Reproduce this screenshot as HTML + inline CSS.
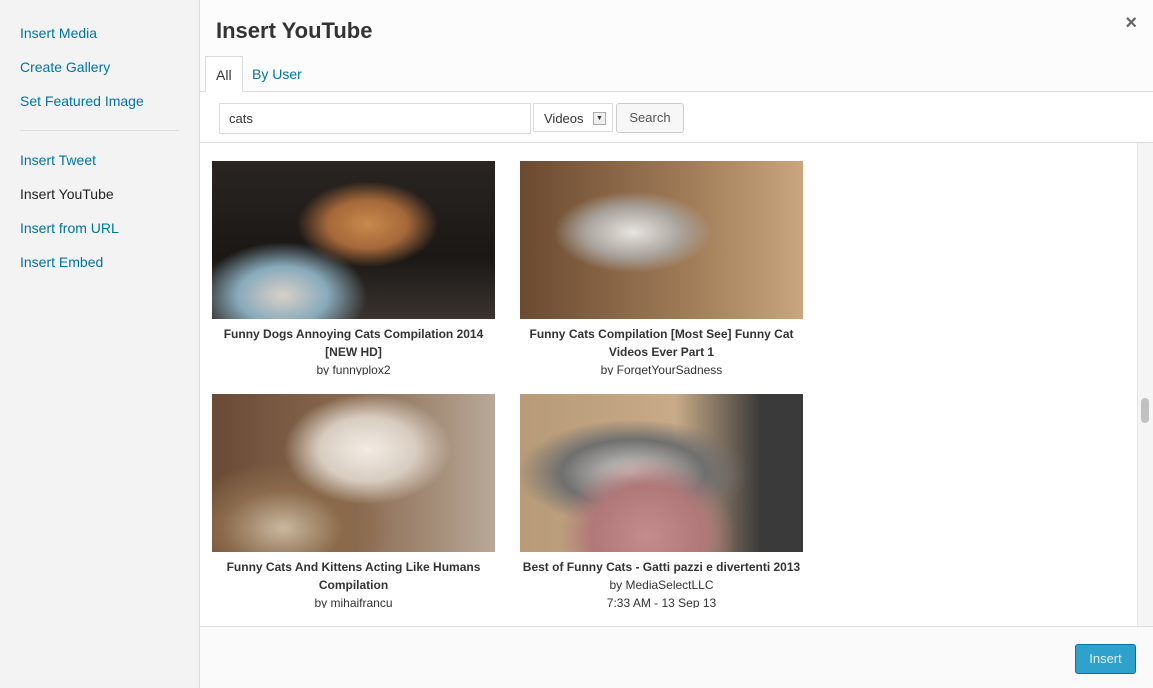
<!DOCTYPE html>
<html><head><style>
*{margin:0;padding:0;box-sizing:border-box}
body{width:1153px;height:688px;overflow:hidden;font-family:"Liberation Sans",sans-serif;background:#fff;position:relative}
.side{position:absolute;left:0;top:0;width:200px;height:688px;background:#f3f3f3;border-right:1px solid #ddd}
.side a{position:absolute;left:20px;font-size:14px;color:#0074a2;text-decoration:none}
.side .cur{color:#222}
.hr{position:absolute;left:20px;width:159px;top:130px;border-top:1px solid #ddd}
.head{position:absolute;left:200px;top:0;width:953px;height:92px;background:#fcfcfc;border-bottom:1px solid #ddd}
h1{position:absolute;left:16px;top:18px;font-size:22px;color:#333;font-weight:bold}
.x{position:absolute;right:16px;top:12px;font-size:20px;color:#666;font-weight:bold}
.tab{position:absolute;top:56px;height:37px;font-size:14px;padding:10px 10px 0}
.bar{position:absolute;left:200px;top:92px;width:953px;height:51px;background:#fff;border-bottom:1px solid #ddd}
.in{position:absolute;left:19px;top:11px;width:312px;height:31px;border:1px solid #ddd;font-size:13px;padding:7px 9px;color:#333}
.sel{position:absolute;left:333px;top:11px;width:80px;height:29px;border:1px solid #ddd;font-size:13px;padding:7px 10px;color:#333}
.sel b{position:absolute;right:6px;top:8px;width:13px;height:13px;background:#eee;border:1px solid #aaa;font-size:7px;text-align:center;line-height:12px}
.btn{position:absolute;left:416px;top:11px;width:68px;height:30px;border:1px solid #ccc;border-radius:3px;background:#f7f7f7;font-size:13px;color:#555;text-align:center;line-height:28px}
.item{position:absolute;width:283px}
.img{height:158px}
.cap{height:50px;overflow:hidden;text-align:center;font-size:12px;line-height:18px;color:#333;margin-top:6px}
.cap b{font-weight:bold}
.sb{position:absolute;left:1137px;top:143px;width:16px;height:483px;background:#f5f5f5;border-left:1px solid #e5e5e5}
.sb i{position:absolute;left:3px;top:255px;width:8px;height:25px;background:#c1c1c1;border-radius:4px}
.foot{position:absolute;left:200px;top:626px;width:953px;height:62px;background:#fafafa;border-top:1px solid #ddd}
.ins{position:absolute;right:17px;top:17px;width:61px;height:30px;background:#2ea2cc;border:1px solid #0074a2;border-radius:3px;color:#e0f0f8;font-size:13px;text-align:center;line-height:28px}
</style></head><body>
<div class="side">
<a style="top:25px">Insert Media</a>
<a style="top:59px">Create Gallery</a>
<a style="top:93px">Set Featured Image</a>
<div class="hr"></div>
<a style="top:152px">Insert Tweet</a>
<a class="cur" style="top:186px">Insert YouTube</a>
<a style="top:220px">Insert from URL</a>
<a style="top:254px">Insert Embed</a>
</div>
<div class="head">
<h1>Insert YouTube</h1>
<div class="x">×</div>
<div class="tab" style="left:5px;width:38px;border:1px solid #ddd;border-bottom:1px solid #fff;background:#fff;color:#333;padding-left:10px">All</div>
<div class="tab" style="left:42px;color:#0074a2">By User</div>
</div>
<div class="bar">
<div class="in">cats</div>
<div class="sel">Videos<b>▼</b></div>
<div class="btn">Search</div>
</div>
<div style="position:absolute;left:200px;top:143px;width:937px;height:483px;overflow:hidden">
<div class="item" style="left:12px;top:18px"><div class="img" style="background:radial-gradient(ellipse at 55% 40%,#c98a4a 0,#a5683a 18%,transparent 32%),radial-gradient(ellipse at 25% 85%,#d9d0c8 0,#8ab 15%,transparent 28%),linear-gradient(#2a2522,#1a1714 60%,#3a3430)"></div><div class="cap"><b>Funny Dogs Annoying Cats Compilation 2014 [NEW HD]</b><br>by funnyplox2</div></div>
<div class="item" style="left:320px;top:18px"><div class="img" style="background:radial-gradient(ellipse at 40% 45%,#e8e4e0 0,#a9a39c 20%,transparent 33%),linear-gradient(90deg,#6b4a30,#a07c58 60%,#c9a67e);"></div><div class="cap"><b>Funny Cats Compilation [Most See] Funny Cat Videos Ever Part 1</b><br>by ForgetYourSadness</div></div>
<div class="item" style="left:12px;top:251px"><div class="img" style="background:radial-gradient(ellipse at 55% 35%,#f3ece4 0,#d8ccc0 22%,transparent 38%),radial-gradient(ellipse at 25% 85%,#c9b8a0 0,#8a6a4a 20%,transparent 35%),linear-gradient(90deg,#6a4a35,#8a6a50 50%,#b8a898)"></div><div class="cap"><b>Funny Cats And Kittens Acting Like Humans Compilation</b><br>by mihaifrancu</div></div>
<div class="item" style="left:320px;top:251px"><div class="img" style="background:radial-gradient(ellipse at 45% 90%,#c48c8c 0,#b07878 25%,transparent 40%),radial-gradient(ellipse at 40% 50%,#d8d4d0 0,#6f6f6f 30%,transparent 48%),linear-gradient(90deg,#b79a78,#c8aa88 55%,#3a3a3a 85%)"></div><div class="cap"><b>Best of Funny Cats - Gatti pazzi e divertenti 2013</b><br>by MediaSelectLLC<br>7:33 AM - 13 Sep 13</div></div>
</div>
<div class="sb"><i></i></div>
<div class="foot"><div class="ins">Insert</div></div>
</body></html>
